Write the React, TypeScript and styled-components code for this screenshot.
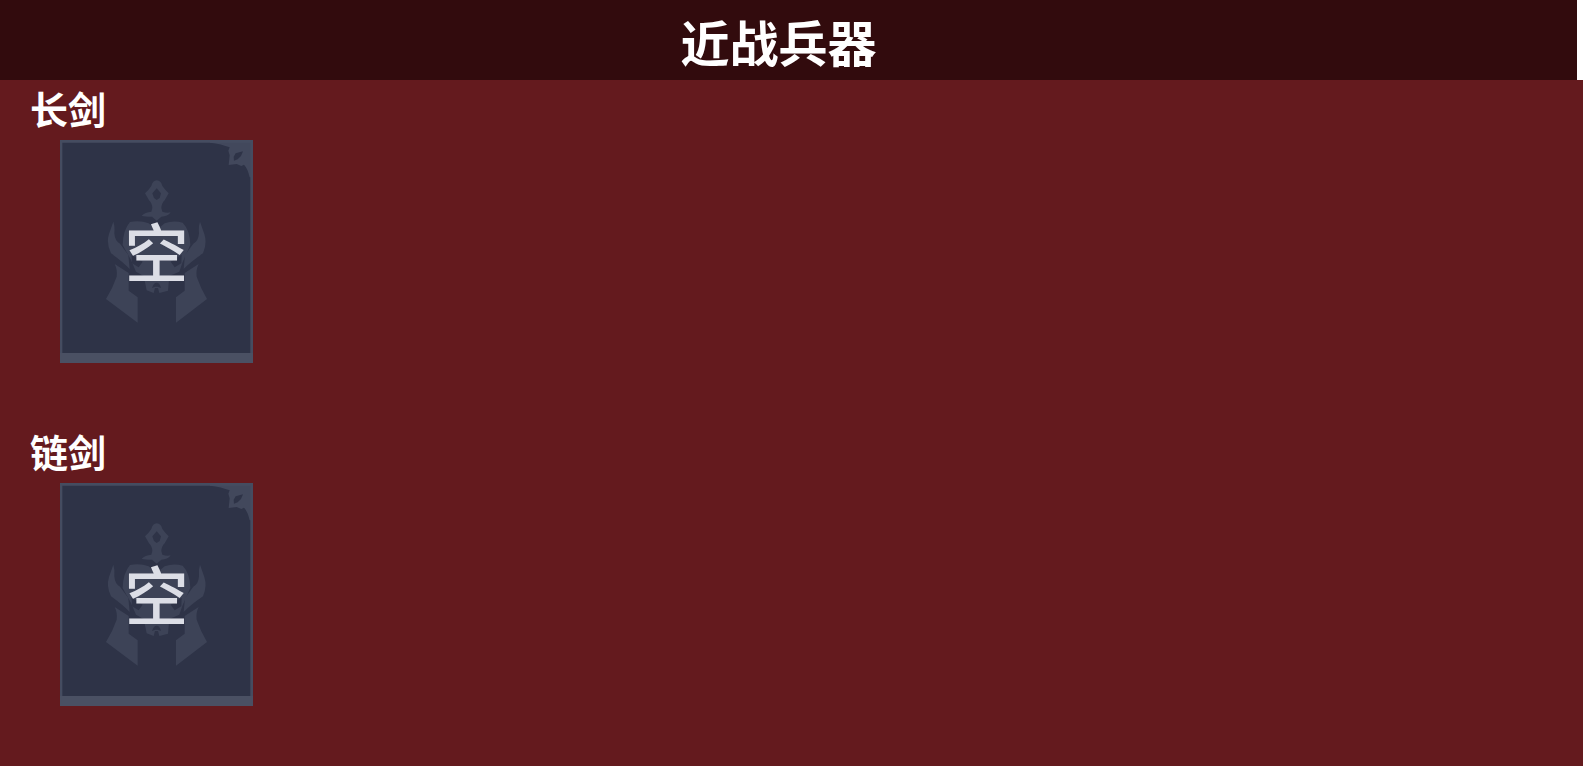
import React from "react";
import styled, { createGlobalStyle } from "styled-components";

const GlobalStyle = createGlobalStyle`
  *, *::before, *::after { box-sizing: border-box; }
  html { background: #641a1e; }
  body {
    margin: 0;
    background: #641a1e;
    color: #fff;
    font-family: "Noto Sans CJK SC", "Noto Sans", sans-serif;
  }
`;

const HeaderBar = styled.header`
  height: 80px;
  padding-right: 20px;
  display: flex;
  align-items: center;
  justify-content: center;
  background: #320b0d;
  border-right: 6px solid #fff;
`;

const Title = styled.h1`
  margin: 0;
  padding-top: 2px;
  font-size: 49px;
  line-height: 72px;
  font-weight: 700;
`;

const Sections = styled.main`
  display: flex;
  flex-direction: column;
  padding: 0 30px;
`;

const Section = styled.section`
  padding-bottom: 60px;
`;

const SectionTitle = styled.h2`
  margin: 0;
  padding-bottom: 4px;
  font-size: 38px;
  line-height: 56px;
  font-weight: 700;
`;

const SlotList = styled.ul`
  margin: 0;
  padding: 0 30px;
  display: flex;
  flex-wrap: wrap;
  gap: 24px;
  list-style: none;
`;

const Slot = styled.li`
  display: grid;
  place-items: center;
  width: 193px;
  height: 223px;
  background: #2e3347;

  > * { grid-area: 1 / 1; }
`;

const SlotArt = styled.svg`
  display: block;
  width: 100%;
  height: 100%;
`;

const SlotLabel = styled.span`
  padding-bottom: 6px;
  font-size: 64px;
  line-height: 64px;
  font-weight: 500;
  color: #dcdee6;
`;

const EmblemArt = () => (
  <SlotArt viewBox="30 30 579 669" aria-hidden="true">
    <g fill="#3d4357">
      <path
        fillRule="evenodd"
        d="M320 151 Q333 152 337 168 Q345 179 356 190 L344 211 Q335 219 334 234 L337 245 Q350 250 362 247 Q353 260 334 260 L320 272 L306 260 Q285 260 275 257 Q285 247 304 245 L307 234 Q306 219 297 211 L285 190 Q297 179 304 168 Q308 152 320 151 Z M320 175 L307 190 L312 204 L320 210 L329 204 L333 190 Z"
      />
      <path d="M240 276 Q270 270 296 280 L320 300 L344 280 Q370 270 398 278 Q420 300 421 345 L398 396 L388 425 L358 438 L354 482 L328 489 L324 474 L315 474 L311 489 L290 481 L281 438 L258 425 L243 390 L218 345 Q219 300 240 276 Z" />
      <path d="M190 275 Q195 290 193 310 Q195 334 210 341 L235 375 L239 417 Q220 397 183 370 Q168 340 177 312 Z" />
      <path d="M450 275 Q445 290 447 310 Q445 334 430 341 L405 375 L401 417 Q420 397 459 370 Q472 340 463 312 Z" />
      <path d="M194 402 L236 429 L236 482 L263 502 L263 578 L168 507 Q188 475 200 440 Q203 420 194 402 Z" />
      <path d="M446 402 L404 429 L404 482 L378 502 L378 578 L471 507 Q452 475 440 440 Q437 420 446 402 Z" />
    </g>
    <g fill="#2e3347">
      <path d="M245 374 L278 395 L266 412 L246 400 Z M395 374 L362 395 L374 412 L394 400 Z" />
      <path d="M306 474 Q311 458 320 458 Q329 458 333 474 L323 470 L316 470 Z" />
    </g>
    <path
      fill="#42485c"
      fillRule="evenodd"
      d="M480 38 Q515 42 539 52 L535 62 L539 76 L536 105 L560 102 L574 108 L582 104 Q593 115 599 142 L609 142 L609 30 L480 30 Z M579 64 L557 70 L551 80 L552 92 L563 88 L573 78 Z"
    />
    <path fill="#454c60" d="M30 30 H609 V38 H30 Z M30 30 H37 V699 H30 Z M601 30 H609 V699 H601 Z" />
    <path fill="#4a5063" d="M30 669 H609 V699 H30 Z" />
  </SlotArt>
);

const weaponGroups = ["长剑", "链剑"];

export default function App() {
  return (
    <>
      <GlobalStyle />
      <HeaderBar>
        <Title>近战兵器</Title>
      </HeaderBar>
      <Sections>
        {weaponGroups.map((name) => (
          <Section key={name}>
            <SectionTitle>{name}</SectionTitle>
            <SlotList>
              <Slot>
                <EmblemArt />
                <SlotLabel>空</SlotLabel>
              </Slot>
            </SlotList>
          </Section>
        ))}
      </Sections>
    </>
  );
}
